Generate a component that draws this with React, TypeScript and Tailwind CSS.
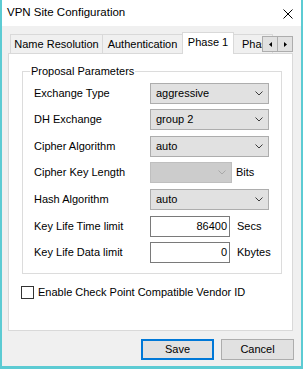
import React from "react";

function Chevron({ color = "#3c3c3c" }: { color?: string }) {
  return (
    <svg width="8" height="5" viewBox="0 0 8 5" className="block">
      <path d="M0.5 0.5 L4 4 L7.5 0.5" fill="none" stroke={color} strokeWidth="1" />
    </svg>
  );
}

function Combo({ value, width = "w-[119px]", disabled = false }: { value: string; width?: string; disabled?: boolean }) {
  return (
    <div
      className={
        "h-[21px] flex items-center justify-between pl-[5px] pr-[5px] border " +
        width +
        (disabled ? " bg-[#cccccc] border-[#bfbfbf]" : " bg-[#e1e1e1] border-[#adadad]")
      }
    >
      <span>{value}</span>
      <Chevron color={disabled ? "#a8a8a8" : "#3c3c3c"} />
    </div>
  );
}

function Row({ label, children, className = "" }: { label: string; children: React.ReactNode; className?: string }) {
  return (
    <div className={"flex items-center h-[21px] " + className}>
      <span className="w-[116px] shrink-0">{label}</span>
      {children}
    </div>
  );
}

export default function App() {
  return (
    <div className="w-[303px] h-[369px] bg-[#f0f0f0] border-x-2 border-b-[3px] border-[#5ccbd3] flex flex-col font-['Liberation_Sans',Arial,sans-serif] text-[11px] text-black leading-none">
      {/* Title bar */}
      <div className="h-[26px] shrink-0 bg-white flex items-center justify-between pl-[5px] pr-[8px]">
        <span className="text-[11.5px]">VPN Site Configuration</span>
        <svg width="10" height="10" viewBox="0 0 10 10" className="mt-[2px]">
          <path d="M0.5 0.5 L9.5 9.5 M9.5 0.5 L0.5 9.5" stroke="#000" strokeWidth="1" />
        </svg>
      </div>

      {/* Tab strip */}
      <div className="relative mt-[6px] h-[21px] ml-[8px] mr-[8px] flex items-end shrink-0">
        <div className="w-[93px] h-[19px] border-t border-x border-[#d9d9d9] bg-[#f0f0f0] flex items-center justify-center">
          Name Resolution
        </div>
        <div className="-ml-px w-[81px] h-[19px] border-t border-x border-[#d9d9d9] bg-[#f0f0f0] flex items-center justify-center">
          Authentication
        </div>
        <div className="relative z-10 -ml-px -mb-px w-[52px] h-[22px] border-t border-x border-[#d9d9d9] bg-white flex items-center justify-center pb-[3px]">
          Phase 1
        </div>
        <div className="-ml-px w-[40px] h-[19px] border-t border-x border-[#d9d9d9] bg-[#f0f0f0] flex items-center pl-[8px] overflow-hidden whitespace-nowrap">
          Phase 2
        </div>
        {/* Scroll buttons */}
        <div className="absolute right-0 top-[4px] z-20 flex">
          <div className="w-[16px] h-[16px] bg-[#e1e1e1] border border-[#adadad] flex items-center justify-center">
            <svg width="3" height="5" viewBox="0 0 3 5"><path d="M3 0 L0 2.5 L3 5 Z" fill="#000" /></svg>
          </div>
          <div className="-ml-px w-[16px] h-[16px] bg-[#e1e1e1] border border-[#adadad] flex items-center justify-center">
            <svg width="3" height="5" viewBox="0 0 3 5"><path d="M0 0 L3 2.5 L0 5 Z" fill="#000" /></svg>
          </div>
        </div>
      </div>

      {/* Tab panel */}
      <div className="ml-[6px] w-[285px] h-[278px] shrink-0 bg-white border border-[#d9d9d9] flex flex-col">
        <div className="relative ml-[13px] mt-[17px] w-[260px] border border-[#dcdcdc] pl-[11px] pt-[11px] pb-[10px] flex flex-col">
          <span className="absolute left-[7px] -top-[7px] bg-white px-px leading-[13px]">Proposal Parameters</span>
          <Row label="Exchange Type">
            <Combo value="aggressive" />
          </Row>
          <Row label="DH Exchange" className="mt-[5px]">
            <Combo value="group 2" />
          </Row>
          <Row label="Cipher Algorithm" className="mt-[6px]">
            <Combo value="auto" />
          </Row>
          <Row label="Cipher Key Length" className="mt-[5px]">
            <Combo value="" width="w-[82px]" disabled />
            <span className="ml-[4px]">Bits</span>
          </Row>
          <Row label="Hash Algorithm" className="mt-[6px]">
            <Combo value="auto" />
          </Row>
          <Row label="Key Life Time limit" className="mt-[6px]">
            <div className="w-[80px] h-[21px] border border-[#7a7a7a] bg-white flex items-center justify-end pr-[2px]">86400</div>
            <span className="ml-[7px]">Secs</span>
          </Row>
          <Row label="Key Life Data limit" className="mt-[5px]">
            <div className="w-[80px] h-[21px] border border-[#7a7a7a] bg-white flex items-center justify-end pr-[2px]">0</div>
            <span className="ml-[7px]">Kbytes</span>
          </Row>
        </div>

        <div className="mt-[12px] ml-[12px] flex items-center h-[13px]">
          <div className="w-[13px] h-[13px] border border-[#333333] bg-white shrink-0" />
          <span className="ml-[4px]">Enable Check Point Compatible Vendor ID</span>
        </div>
      </div>

      {/* Buttons */}
      <div className="mt-[8px] flex justify-end gap-[7px] pr-[7px]">
        <div className="w-[73px] h-[21px] border-2 border-[#0078d7] bg-[#e1e1e1] flex items-center justify-center">Save</div>
        <div className="w-[73px] h-[21px] border border-[#adadad] bg-[#e1e1e1] flex items-center justify-center">Cancel</div>
      </div>
    </div>
  );
}
